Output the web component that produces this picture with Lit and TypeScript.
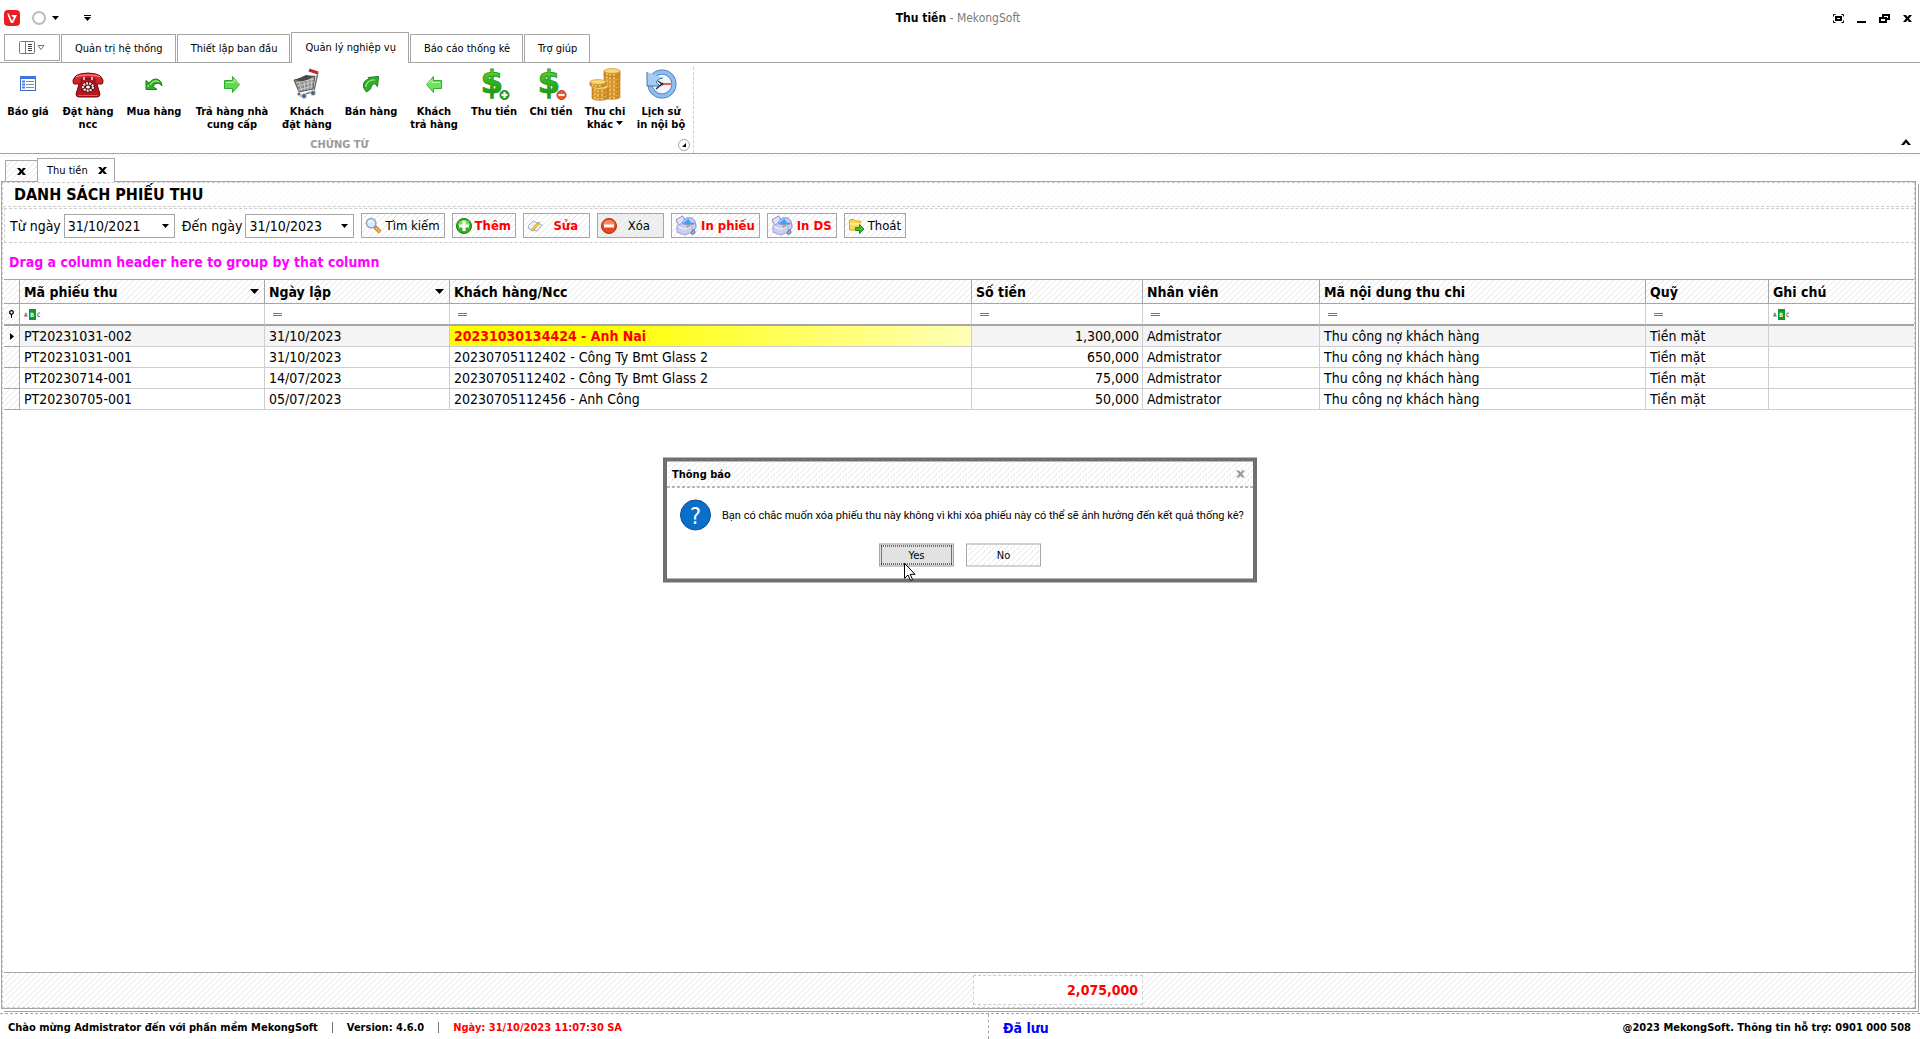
import { LitElement, html, css, svg, nothing, TemplateResult } from "lit";
import { customElement, state } from "lit/decorators.js";

const caret = html`<svg class="caret" width="7" height="4" viewBox="0 0 7 4" aria-hidden="true"><path d="M0 0h7L3.500 4z" fill="#000" /></svg>`;
const cross = (color = "#000") => html`<svg width="9" height="7" viewBox="0 0 9 7" aria-hidden="true">
  <path d="M0 0h3l1.500 2L6 0h3L6 3.500L9 7H6L4.500 5L3 7H0l3-3.500z" fill=${color} /></svg>`;

const icon32 = (body: TemplateResult) => html`<svg width="32" height="32" viewBox="0 0 32 32" aria-hidden="true">${body}</svg>`;

const dollar = (id: string) => svg`
  <defs><linearGradient id=${id} x1="0" y1="0" x2="0" y2="1">
    <stop offset="0" stop-color="#8be04a" /><stop offset=".5" stop-color="#2fb41c" /><stop offset="1" stop-color="#178a12" />
  </linearGradient></defs>
  <text class="dollar" x="14" y="25" text-anchor="middle" fill="url(#${id})" stroke="#2a9a1c" stroke-width="1">$</text>`;

const coin = (x: number, y: number) => svg`
  <path d="M${x - 8} ${y}v3c0 3 16 3 16 0v-3z" fill="#d9921f" stroke="#a8650d" stroke-width=".6" />
  <path d="M${x - 5} ${y + 2}v2.500M${x - 2} ${y + 3}v2M${x + 2} ${y + 3}v2" stroke="#fbe08a" stroke-width="1.200" />
  <ellipse cx=${x} cy=${y} rx="8" ry="2.400" fill="#f9d978" stroke="#c4852a" stroke-width=".6" />`;

const icons: Record<string, TemplateResult> = {
  quote: icon32(svg`
    <rect x="8.500" y="8.500" width="15" height="14" fill="#fff" stroke="#3a6ad0" />
    <rect x="8" y="8" width="16" height="3" fill="#3f75e0" />
    <path d="M10 13.500h3M10 16.500h3M10 19.500h3" stroke="#4a7de0" stroke-width="2" />
    <path d="M14 13.500h8M14 16.500h8M14 19.500h8" stroke="#7b8da8" />` as TemplateResult),
  phone: icon32(svg`
    <path d="M8 13L4 26q0 3 3 3h18q3 0 3-3L24 13l-3-2H11z" fill="#b8151c" stroke="#6d0a0e" />
    <path d="M9 11q3-1 14 0l-1-3H10z" fill="#8a0d12" />
    <path d="M8 6Q3 7 1 12q0 4 1 4h6q2-1 1-5q7-2 14 0q-1 4 1 5h6q1 0 1-4q-2-5-7-6Q16 4 8 6" fill="#d3232a" stroke="#7d0c10" />
    <path d="M4 9Q8 7 16 7T28 9" fill="none" stroke="#f07c7c" stroke-width="1.300" />
    <path d="M12 12v-3M20 12v-3" stroke="#eee" stroke-width="1.500" />
    <ellipse cx="16" cy="19" rx="7" ry="5.500" fill="#5a0a0d" />
    <ellipse cx="16" cy="19" rx="5" ry="3.600" fill="none" stroke="#f4f4f4" stroke-width="2.200" stroke-dasharray="2 1" />
    <ellipse cx="16" cy="19" rx="2" ry="1.500" fill="#fff" />
    <path d="M6 27.500h20" stroke="#e9555a" />` as TemplateResult),
  undo: icon32(svg`
    <path d="M8 21.500v-9l3 2.500q5-6 10-3q3 2 3 6q-3-4-6-2.500q-2 1-3 3l4 3z" fill="#2fae2a" stroke="#16811a" />
    <path d="M10 19v-2M12 17q4-6 9-3" fill="none" stroke="#a9ec83" stroke-width="1.200" />` as TemplateResult),
  right: icon32(svg`
    <path d="M8.500 12.500h8v-4l7 8l-7 8v-4h-8z" fill="#5edb4c" stroke="#2fae2a" />
    <path d="M10 14.500h8v-3l4 4" fill="none" stroke="#b5f5a5" />` as TemplateResult),
  cart: icon32(svg`
    <path d="M18 2l9 3" stroke="#c8242c" stroke-width="3" />
    <path d="M27 4l-4 19L9 28" fill="none" stroke="#777" stroke-width="1.500" />
    <path d="M3 12l5 12l14-3l2-13z" fill="#8d8d8d" stroke="#555" />
    <path d="M4 12l11-5l8 1l-11 6z" fill="#4a4a4a" />
    <path d="M8 14l3 9M13 14l1 8M17 12v10M21 10l-1 11M5 15l18-4M6 18l17-4M7 22l15-4" stroke="#d8d8d8" stroke-width=".8" />
    <g fill="#4d5f7c" stroke="#cfd6e2"><circle cx="13" cy="28" r="2.500" /><circle cx="22" cy="25" r="2.500" /><circle cx="8" cy="26" r="1.800" /></g>` as TemplateResult),
  upright: icon32(svg`
    <path d="M13 9.500l10.500-1l-1 10l-3-3q-4 2-4 5.500l-4 3q-5-5-2-10.500q2-2 5-2.500z" fill="#2fae2a" stroke="#16811a" />
    <path d="M11 19q0-5 6-7h3" fill="none" stroke="#a9ec83" stroke-width="1.200" />` as TemplateResult),
  left: icon32(svg`
    <path d="M23.500 12.500h-8v-4l-7 8l7 8v-4h8z" fill="#6fe35c" stroke="#2fae2a" />
    <path d="M22 14.500h-8v-3l-4 4" fill="none" stroke="#c0f7b2" />` as TemplateResult),
  income: icon32(svg`${dollar("gin")}
    <circle cx="26.500" cy="27" r="4.500" fill="#2fae2a" stroke="#137312" /><path d="M23.500 27h6M26.500 24v6" stroke="#fff" stroke-width="2" />` as TemplateResult),
  outcome: icon32(svg`${dollar("gout")}
    <circle cx="26.500" cy="27" r="4.500" fill="#ee5a28" stroke="#b9340f" /><path d="M23.500 27h6" stroke="#fff" stroke-width="2" />` as TemplateResult),
  coins: icon32(svg`
    ${[26, 22, 18, 14, 10, 6, 3].map((y) => coin(23, y))}
    ${[27, 23, 19, 14].map((y, i) => coin(i === 3 ? 9 : 11, y))}` as TemplateResult),
  history: icon32(svg`
    <circle cx="17" cy="16" r="12" fill="#eef5fd" stroke="#3f74b5" stroke-width="5" />
    <circle cx="17" cy="16" r="12" fill="none" stroke="#8fbdec" stroke-width="3.500" />
    <path d="M2 4v14h13l-4-4q2-4 7-4" fill="#a5ccf2" stroke="#3f74b5" />
    <path d="M17 16h9" stroke="#e0281e" stroke-width="1.500" /><path d="M17 16l-6 5M17 16l-4-3" stroke="#333" stroke-width="1.500" />
    <circle cx="17" cy="16" r="1.500" fill="#333" />` as TemplateResult),
};

const printer = html`<svg width="23" height="21" viewBox="0 0 24 22" aria-hidden="true">
  <path d="M1 5l7-4l4 6l-8 4z" fill="#dfe2f7" stroke="#7d84c4" />
  <path d="M8 7q3-5 9-4q5 2 5 10l-3 4H8z" fill="#b9d8fa" stroke="#7d84c4" />
  <path d="M8 9l6-5l4 6l-9 1z" fill="#3fa2f5" />
  <path d="M2 11l5-2l11 3v6l-8 3l-8-3z" fill="#c9cff2" stroke="#9aa0da" />
  <path d="M3 12l7 3l7-3" fill="none" stroke="#fff" />
  <path d="M12 13l4-2" stroke="#f09a3c" stroke-width="2" /><path d="M17 9h3" stroke="#e2574c" stroke-width="2" />
  <path d="M17 18q3-5 4 0q-1 3-4 2z" fill="#9fa5d6" stroke="#6569a8" /></svg>`;

const toolIcons: Record<string, TemplateResult> = {
  find: html`<svg width="17" height="17" viewBox="0 0 18 18" aria-hidden="true">
    <path d="M10 10l6 6" stroke="#a86a1e" stroke-width="4" /><path d="M11 11l5 5" stroke="#f6b44c" stroke-width="2.500" />
    <circle cx="6.500" cy="6.500" r="5" fill="#d3ecff" stroke="#8fa6c2" stroke-width="1.600" /><path d="M4 6q1-2 3-2" stroke="#fff" stroke-width="1.500" fill="none" /></svg>`,
  add: html`<svg width="16" height="16" viewBox="0 0 16 16" aria-hidden="true"><circle cx="8" cy="8" r="7.500" fill="#35b222" stroke="#137a10" /><path d="M2 7q1-5 6-5t6 5z" fill="#7cd65e" />
    <path d="M3 8h10M8 3v10" stroke="#fff" stroke-width="3" /></svg>`,
  edit: html`<svg width="16" height="16" viewBox="0 0 16 16" aria-hidden="true"><path d="M1 8l5-5l9 4l-5 6l-8-2z" fill="#e8f3fd" stroke="#8fb4dc" />
    <path d="M4 12L11 4l2 1l-7 8z" fill="#f8c62e" stroke="#d9a520" stroke-width=".8" /></svg>`,
  remove: html`<svg width="16" height="16" viewBox="0 0 16 16" aria-hidden="true"><circle cx="8" cy="8" r="7.500" fill="#e8481c" stroke="#b02f0b" /><path d="M2 7q1-5 6-5t6 5z" fill="#f58a60" />
    <path d="M3 8h10" stroke="#fff" stroke-width="3" /></svg>`,
  print: printer,
  exit: html`<svg width="17" height="16" viewBox="0 0 17 16" aria-hidden="true"><path d="M1.500 3q0-1.500 1.500-1.500h3l1.500 1.500h5v9h-11z" fill="#fbd84b" stroke="#d9a520" />
    <path d="M2 6h11" stroke="#fdf0a8" stroke-width="1.500" /><path d="M7.500 9.500h4v-3l4.500 4.500l-4.500 4.500v-3h-4z" fill="#46b83c" stroke="#208a1e" /></svg>`,
};

interface RibbonItem { icon: string; lines: string[]; menu?: boolean }
const RIBBON: RibbonItem[] = [
  { icon: "quote", lines: ["Báo giá"] },
  { icon: "phone", lines: ["Đặt hàng", "ncc"] },
  { icon: "undo", lines: ["Mua hàng"] },
  { icon: "right", lines: ["Trả hàng nhà", "cung cấp"] },
  { icon: "cart", lines: ["Khách", "đặt hàng"] },
  { icon: "upright", lines: ["Bán hàng"] },
  { icon: "left", lines: ["Khách", "trả hàng"] },
  { icon: "income", lines: ["Thu tiền"] },
  { icon: "outcome", lines: ["Chi tiền"] },
  { icon: "coins", lines: ["Thu chi", "khác"], menu: true },
  { icon: "history", lines: ["Lịch sử", "in nội bộ"] },
];

const RIBBON_TABS = ["Quản trị hệ thống", "Thiết lập ban đầu", "Quản lý nghiệp vụ", "Báo cáo thống kê", "Trợ giúp"];

const COLUMNS = [
  { title: "Mã phiếu thu", sort: true, filter: "abc" },
  { title: "Ngày lập", sort: true, filter: "eq" },
  { title: "Khách hàng/Ncc", filter: "eq" },
  { title: "Số tiền", filter: "eq" },
  { title: "Nhân viên", filter: "eq" },
  { title: "Mã nội dung thu chi", filter: "eq" },
  { title: "Quỹ", filter: "eq" },
  { title: "Ghi chú", filter: "abc" },
];

const ROWS = [
  ["PT20231031-002", "31/10/2023", "20231030134424 - Anh Nai", "1,300,000"],
  ["PT20231031-001", "31/10/2023", "20230705112402 - Công Ty Bmt Glass 2", "650,000"],
  ["PT20230714-001", "14/07/2023", "20230705112402 - Công Ty Bmt Glass 2", "75,000"],
  ["PT20230705-001", "05/07/2023", "20230705112456 - Anh Công", "50,000"],
].map((r) => [...r, "Admistrator", "Thu công nợ khách hàng", "Tiền mặt", ""]);

@customElement("app-root")
export class AppRoot extends LitElement {
  @state() private activeTab = 2;
  @state() private selected = 0;
  @state() private dialogOpen = true;

  static styles = css`
    :host {
      --line: #a6a6a6;
      --soft: #cdcdcd;
      --hatch: url("data:image/svg+xml,%3Csvg xmlns='http://www.w3.org/2000/svg' width='6' height='6'%3E%3Cpath fill='%23e6e6e6' d='M0 5h1v1H0zM1 4h1v1H1zM2 3h1v1H2zM3 2h1v1H3zM4 1h1v1H4zM5 0h1v1H5z'/%3E%3C/svg%3E");
      --faint: url("data:image/svg+xml,%3Csvg xmlns='http://www.w3.org/2000/svg' width='6' height='6'%3E%3Cpath fill='%23f5f5f5' d='M0 5h1v1H0zM1 4h1v1H1zM2 3h1v1H2zM3 2h1v1H3zM4 1h1v1H4zM5 0h1v1H5z'/%3E%3C/svg%3E");
      --cols: 16px 245px 185px 522px 171px 177px 326px 123px 1fr;
      display: flex;
      flex-direction: column;
      min-height: 100vh;
      background: #fff;
      color: #000;
      font: 11px/13px "DejaVu Sans Condensed", "DejaVu Sans", sans-serif;
    }
    * { box-sizing: border-box; }
    button, input { font: inherit; color: inherit; margin: 0; padding: 0; border: 0; background: none; }
    svg { display: block; flex: none; overflow: visible; }
    h1, h2, p { margin: 0; font-size: inherit; }

    .titlebar { display: grid; grid-template-columns: 1fr auto 1fr; align-items: center; height: 32px; padding: 4px 8px 0 4px; }
    .quick { display: flex; align-items: center; }
    .quick .ring { margin-left: 12px; }
    .quick .caret { margin-left: 6px; }
    .quick .more { margin-left: 25px; }
    .caption { color: #7a7a7a; font-size: 12px; }
    .caption span { font-weight: normal; }
    .caption b { color: #000; }
    .window { display: flex; justify-content: flex-end; align-items: center; gap: 13px; }

    .tabs { display: flex; align-items: flex-end; gap: 1px; height: 31px; padding-left: 4px; border-bottom: 1px solid var(--line); }
    .tab { height: 28px; padding: 0 12px 0 13px; border: 1px solid var(--line); border-bottom: 0; background: #fff; white-space: nowrap; }
    .tab.active { height: 31px; margin-bottom: -1px; padding-bottom: 1px; }
    .tab.app { display: flex; align-items: center; justify-content: center; gap: 2px; width: 56px; height: 27px; padding: 0; margin-bottom: 1px; border-bottom: 1px solid var(--line); }

    .ribbon { display: flex; justify-content: space-between; align-items: stretch; height: 91px; border-bottom: 1px solid var(--line); }
    .group { position: relative; width: 694px; margin-top: 4px; border-right: 1px dashed var(--soft); }
    .items { display: grid; grid-template-columns: 48px 72px 60px 96px 54px 74px 52px 68px 46px 62px 50px; padding-left: 4px; }
    .item { display: flex; flex-direction: column; align-items: center; height: 68px; font-weight: bold; white-space: nowrap; }
    .item svg { margin: 1px 0 5px; }
    .item .caret { display: inline-block; margin: 0 0 3px 3px; }
    .item .dollar { font: bold 32px "DejaVu Sans", sans-serif; }
    .glabel { display: flex; align-items: center; justify-content: center; height: 18px; color: #9a9a9a; font-weight: bold; padding-right: 14px; }
    .launcher { position: absolute; right: 3px; bottom: 2px; }
    .collapse { align-self: flex-end; padding: 0 9px 8px 0; }

    .docs { display: flex; align-items: flex-end; height: 27px; padding-left: 5px; background: var(--hatch) 0 0 / 6px 3px repeat-x; }
    .doc { display: flex; align-items: center; justify-content: center; height: 21px; width: 33px; border: 1px solid var(--line); border-bottom: 0; background: #fff var(--hatch); }
    .doc.active { justify-content: space-between; width: 78px; height: 24px; margin: 0 0 -1px -1px; padding: 0 7px 1px 9px; background: #fff; z-index: 1; }
    .doc.active span { white-space: nowrap; }

    .frame { display: flex; flex-direction: column; flex: 1; margin: 0 4px 4px 1px; border: 1px solid var(--line); box-shadow: 2px 2px 0 #fff, 3px 3px 0 var(--line); }
    .inner { display: flex; flex-direction: column; flex: 1; border: 1px dashed var(--soft); }
    .heading { height: 24px; padding-left: 11px; border-bottom: 1px dashed var(--soft); background: var(--faint); font-size: 16px; line-height: 24px; font-weight: bold; }
    .toolbar { display: flex; align-items: center; gap: 7px; height: 35px; margin: 1px 0 0 1px; padding-left: 5px; border: 1px dashed var(--soft); border-right: 0; font-size: 14px; line-height: 18px; }
    .field { display: flex; align-items: center; gap: 3px; white-space: nowrap; }
    .date { display: flex; align-items: center; height: 24px; width: 111px; padding-right: 5px; border: 1px solid var(--line); }
    .date.short { width: 109px; }
    .date input { flex: 1; min-width: 0; padding-left: 3px; outline: 0; }
    .cmd { display: flex; align-items: center; gap: 3px; height: 25px; padding: 0 4px 0 3px; border: 1px solid var(--line); background: var(--hatch); white-space: nowrap; font-size: 13px; }
    .cmd.alert { color: #f00; font-weight: bold; }
    .cmd.wide { width: 67px; justify-content: space-between; padding-right: 11px; }
    .cmd.hot { background: var(--hatch), #f0f0f0; padding-right: 13px; }

    .groupby { height: 36px; padding-left: 6px; color: #f0f; font-size: 14px; line-height: 38px; font-weight: bold; }
    .gridwrap { flex: 1; margin-left: 1px; border-top: 1px solid var(--line); font-size: 14px; line-height: 18px; }
    table { width: 100%; border-spacing: 0; table-layout: fixed; }
    .c0 { width: 16px; } .c1 { width: 245px; } .c2 { width: 185px; } .c3 { width: 522px; } .c4 { width: 171px; }
    .c5 { width: 177px; } .c6 { width: 326px; } .c7 { width: 123px; }
    th, td { height: 21px; padding: 0 3px 0 4px; border-right: 1px solid var(--soft); border-bottom: 1px solid var(--soft); text-align: left; white-space: nowrap; overflow: hidden; }
    th:last-child, td:last-child { border-right: 0; }
    thead th { height: 24px; background: var(--hatch); border-color: var(--line); }
    .head { display: flex; align-items: center; justify-content: space-between; }
    .head svg { margin-right: 2px; }
    .filter td { border-bottom: 2px solid var(--line); height: 22px; }
    .mark { padding: 0; background: var(--hatch); border-color: var(--line); }
    .mark svg { margin: 0 auto; }
    .sel td { background-color: #f4f4f4; }
    .sel .mark { background-color: #fff; }
    .sel .focus { background: linear-gradient(90deg, #ff0 30%, #ffffb8); color: #f00; font-weight: bold; }
    .num { text-align: right; }
    .eq { display: block; width: 9px; height: 3px; margin-left: 4px; border: solid #777; border-width: 1px 0; }
    .abc { display: flex; align-items: center; gap: 1px; color: #666; font: bold 6px/11px "DejaVu Sans Mono", monospace; }
    .abc b { width: 7px; background: #0a9b28; color: #fff; text-align: center; }

    .summary { display: grid; grid-template-columns: var(--cols); align-items: start; height: 35px; margin-left: 1px; border-top: 1px solid var(--line); background: var(--hatch); }
    .total { grid-column: 5; height: 30px; margin: 2px 0 0 1px; padding-right: 4px; border: 1px dashed var(--soft); background: #fff; color: #f00; font-size: 14px; line-height: 28px; font-weight: bold; text-align: right; }

    .status { display: flex; height: 26px; border-top: 1px dashed var(--line); font-weight: bold; line-height: 28px; white-space: nowrap; }
    .left { display: flex; gap: 14px; width: 988px; padding-left: 8px; }
    .sep { width: 1px; height: 11px; margin-top: 8px; background: #777; }
    .now { color: #f00; }
    .saved { flex: 1; padding-left: 14px; border-left: 1px dashed var(--line); color: #00f; font-size: 14px; }
    .support { padding-right: 9px; }

    .dialog { position: fixed; left: 50%; top: 50%; translate: -50% -50%; width: 594px; border: 4px solid #707070; background: #fff; }
    .dtitle { display: flex; align-items: center; justify-content: space-between; height: 26px; padding: 0 8px 0 5px; border-bottom: 1px dashed #707070; background: var(--hatch); }
    .dbody { display: flex; align-items: center; gap: 11px; padding: 12px 13px 13px; white-space: nowrap; }
    .dbody p { font-family: Roboto, "Liberation Sans", sans-serif; }
    .qmark { fill: #fff; font-size: 23px; }
    .actions { display: flex; justify-content: center; gap: 12px; padding-bottom: 12px; }
    .answer { width: 75px; height: 23px; border: 1px solid var(--line); background: var(--hatch); }
    .answer.yes { background: var(--hatch), #e1e1e1; padding: 1px; }
    .answer.yes span { display: block; height: 19px; border: 1px dotted #000; line-height: 18px; }
    .cursor { position: absolute; left: 237px; top: 101px; }
  `;

  private renderDialog() {
    return html`<section class="dialog" role="dialog" aria-labelledby="dlg-title">
      <div class="dtitle"><h2 id="dlg-title">Thông báo</h2>
        <button aria-label="Đóng" @click=${() => (this.dialogOpen = false)}>${cross("#999")}</button></div>
      <div class="dbody">
        <svg width="31" height="31" viewBox="0 0 31 31" aria-hidden="true"><circle cx="15.500" cy="15.500" r="15" fill="#0a6fc9" stroke="#084f91" />
          <text class="qmark" x="15.500" y="24" text-anchor="middle">?</text></svg>
        <p>Bạn có chắc muốn xóa phiếu thu này không vì khi xóa phiếu này có thể sẽ ảnh hưởng đến kết quả thống kê?</p>
      </div>
      <div class="actions">
        <button class="answer yes" @click=${() => (this.dialogOpen = false)}><span>Yes</span></button>
        <button class="answer" @click=${() => (this.dialogOpen = false)}>No</button>
      </div>
      <svg class="cursor" width="12" height="19" viewBox="0 0 12 19" aria-hidden="true">
        <path d="M.5.8v15l3.500-3.300l2.500 5.500l2-1l-2.300-5.200h4.800z" fill="#fff" stroke="#000" /></svg>
    </section>`;
  }

  private cmd(icon: string, label: string, cls = "") {
    return html`<button class="cmd ${cls}" @click=${() => { if (icon === "remove") this.dialogOpen = true; }}>${toolIcons[icon]}<span>${label}</span></button>`;
  }

  render() {
    return html`
      <header class="titlebar">
        <div class="quick">
          <svg width="16" height="16" viewBox="0 0 16 16" aria-hidden="true"><rect width="16" height="16" rx="4" fill="#ed1c24" />
            <path d="M3.500 3l1.500 1l3 7l2-4H8.500L7.500 5H13L9 13H7L4 6z" fill="#fff" /></svg>
          <svg class="ring" width="14" height="14" viewBox="0 0 14 14" aria-hidden="true"><circle cx="7" cy="7" r="6" fill="none" stroke="#bdbdbd" stroke-width="2" /></svg>
          ${caret}
          <svg class="more" width="7" height="6" viewBox="0 0 7 6" aria-hidden="true"><path d="M0 0h7v1H0zM0 2h7L3.500 6z" /></svg>
        </div>
        <h1 class="caption"><b>Thu tiền</b><span> - MekongSoft</span></h1>
        <div class="window">
          <button aria-label="Toàn màn hình"><svg width="11" height="9" viewBox="0 0 11 9"><path d="M2.500.5h-2v2M8.500.5h2v2M2.500 8.500h-2v-2M8.500 8.500h2v-2" fill="none" stroke="#000" /><rect x="3" y="3" width="5" height="3" fill="#fff" stroke="#000" stroke-width="2" /></svg></button>
          <button aria-label="Thu nhỏ"><svg width="9" height="9" viewBox="0 0 9 9"><path d="M0 7h9v2H0z" /></svg></button>
          <button aria-label="Khôi phục"><svg width="11" height="9" viewBox="0 0 11 9"><path d="M4 3V1h6v4H8" fill="none" stroke="#000" stroke-width="2" /><rect x="1" y="4" width="6" height="4" fill="#fff" stroke="#000" stroke-width="2" /></svg></button>
          <button aria-label="Đóng cửa sổ">${cross()}</button>
        </div>
      </header>
      <nav class="tabs">
        <button class="tab app" aria-label="Menu ứng dụng">
          <svg width="16" height="13" viewBox="0 0 16 13"><rect x=".5" y=".5" width="15" height="12" rx="1" fill="#fff" stroke="#777" /><path d="M6.500 1v11" stroke="#777" /><path d="M9 3.500h4M9 5.500h4M9 7.500h4M9 9.500h4" stroke="#444" /></svg>
          <svg width="8" height="6" viewBox="0 0 8 6"><path d="M1 .5h6L4 4.500z" fill="#fff" stroke="#777" /></svg>
        </button>
        ${RIBBON_TABS.map((t, i) => html`<button class="tab ${i === this.activeTab ? "active" : ""}" @click=${() => (this.activeTab = i)}>${t}</button>`)}
      </nav>
      <section class="ribbon">
        <div class="group">
          <div class="items">
            ${RIBBON.map((r) => html`<button class="item">${icons[r.icon]}${r.lines.map((l, i) => html`<span>${l}${r.menu && i === 1 ? caret : nothing}</span>`)}</button>`)}
          </div>
          <div class="glabel">CHỨNG TỪ</div>
          <button class="launcher" aria-label="Tùy chọn nhóm"><svg width="12" height="12" viewBox="0 0 12 12"><circle cx="6" cy="6" r="5.500" fill="#fff" stroke="#aaa" /><path d="M8 4v4H4z" /></svg></button>
        </div>
        <button class="collapse" aria-label="Thu gọn"><svg width="10" height="6" viewBox="0 0 10 6"><path d="M0 6L5 0l5 6H7L5 3.500L3 6z" /></svg></button>
      </section>
      <nav class="docs">
        <button class="doc" aria-label="Đóng thẻ">${cross()}</button>
        <button class="doc active"><span>Thu tiền</span>${cross()}</button>
      </nav>
      <main class="frame"><div class="inner">
        <h2 class="heading">DANH SÁCH PHIẾU THU</h2>
        <div class="toolbar">
          <div class="field"><label for="from">Từ ngày</label><div class="date"><input id="from" value="31/10/2021" />${caret}</div></div>
          <div class="field"><label for="to">Đến ngày</label><div class="date short"><input id="to" value="31/10/2023" />${caret}</div></div>
          ${this.cmd("find", "Tìm kiếm")} ${this.cmd("add", "Thêm", "alert")} ${this.cmd("edit", "Sửa", "alert wide")}
          ${this.cmd("remove", "Xóa", "wide hot")} ${this.cmd("print", "In phiếu", "alert")} ${this.cmd("print", "In DS", "alert")}
          ${this.cmd("exit", "Thoát")}
        </div>
        <p class="groupby">Drag a column header here to group by that column</p>
        <div class="gridwrap">
          <table>
            <colgroup>${[0, 1, 2, 3, 4, 5, 6, 7, 8].map((i) => html`<col class="c${i}" />`)}</colgroup>
            <thead><tr><th class="mark"></th>
              ${COLUMNS.map((c) => html`<th scope="col"><div class="head">${c.title}${c.sort ? html`<svg width="9" height="5" viewBox="0 0 9 5"><path d="M0 0h9L4.500 5z" /></svg>` : nothing}</div></th>`)}
            </tr></thead>
            <tbody>
              <tr class="filter"><td class="mark"><svg width="5" height="8" viewBox="0 0 5 8"><circle cx="2.500" cy="2.500" r="1.800" fill="#fff" stroke="#000" stroke-width="1.300" /><path d="M2 4h1v4H2z" /></svg></td>
                ${COLUMNS.map((c) => html`<td>${c.filter === "abc" ? html`<span class="abc">A<b>B</b>C</span>` : html`<span class="eq"></span>`}</td>`)}
              </tr>
              ${ROWS.map((r, i) => html`<tr class=${i === this.selected ? "sel" : ""} @click=${() => (this.selected = i)}>
                <td class="mark">${i === this.selected ? html`<svg width="4" height="7" viewBox="0 0 4 7"><path d="M0 0l4 3.500L0 7z" /></svg>` : nothing}</td>
                ${r.map((v, j) => html`<td class=${j === 3 ? "num" : j === 2 ? "focus" : ""}>${v}</td>`)}
              </tr>`)}
            </tbody>
          </table>
        </div>
        <div class="summary"><div class="total">2,075,000</div></div>
      </div></main>
      <footer class="status">
        <div class="left"><span>Chào mừng Admistrator đến với phần mềm MekongSoft</span><i class="sep"></i><span>Version: 4.6.0</span><i class="sep"></i><span class="now">Ngày: 31/10/2023 11:07:30 SA</span></div>
        <div class="saved">Đã lưu</div>
        <div class="support">@2023 MekongSoft. Thông tin hỗ trợ: 0901 000 508</div>
      </footer>
      ${this.dialogOpen ? this.renderDialog() : nothing}
    `;
  }
}
